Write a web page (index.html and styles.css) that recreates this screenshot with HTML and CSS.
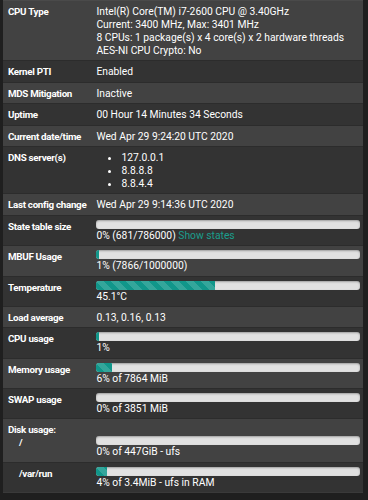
FILE: index.html
```html
<!DOCTYPE html>
<html lang="en">
<head>
    <meta charset="UTF-8">
    <meta name="viewport" content="width=device-width, initial-scale=1.0">
    <title>System Information</title>
    <link rel="stylesheet" href="styles.css">
</head>
<body>
    <div class="panel">
        <table class="info">
            <tr>
                <th>CPU Type</th>
                <td>Intel(R) Core(TM) i7-2600 CPU @ 3.40GHz<br>
                    Current: 3400 MHz, Max: 3401 MHz<br>
                    8 CPUs: 1 package(s) x 4 core(s) x 2 hardware threads<br>
                    AES-NI CPU Crypto: No</td>
            </tr>
            <tr>
                <th>Kernel PTI</th>
                <td>Enabled</td>
            </tr>
            <tr>
                <th>MDS Mitigation</th>
                <td>Inactive</td>
            </tr>
            <tr>
                <th>Uptime</th>
                <td>00 Hour 14 Minutes 34 Seconds</td>
            </tr>
            <tr>
                <th>Current date/time</th>
                <td>Wed Apr 29 9:24:20 UTC 2020</td>
            </tr>
            <tr>
                <th>DNS server(s)</th>
                <td>
                    <ul class="dns">
                        <li>127.0.0.1</li>
                        <li>8.8.8.8</li>
                        <li>8.8.4.4</li>
                    </ul>
                </td>
            </tr>
            <tr>
                <th>Last config change</th>
                <td>Wed Apr 29 9:14:36 UTC 2020</td>
            </tr>
            <tr>
                <th>State table size</th>
                <td>
                    <div class="progress"><div class="bar" style="width: 0%"></div></div>
                    0% (681/786000) <a href="#">Show states</a>
                </td>
            </tr>
            <tr>
                <th>MBUF Usage</th>
                <td>
                    <div class="progress"><div class="bar" style="width: 1%"></div></div>
                    1% (7866/1000000)
                </td>
            </tr>
            <tr>
                <th>Temperature</th>
                <td>
                    <div class="progress"><div class="bar striped" style="width: 45%"></div></div>
                    45.1&deg;C
                </td>
            </tr>
            <tr>
                <th>Load average</th>
                <td>0.13, 0.16, 0.13</td>
            </tr>
            <tr>
                <th>CPU usage</th>
                <td>
                    <div class="progress"><div class="bar" style="width: 1%"></div></div>
                    1%
                </td>
            </tr>
            <tr>
                <th>Memory usage</th>
                <td>
                    <div class="progress"><div class="bar striped" style="width: 6%"></div></div>
                    6% of 7864 MiB
                </td>
            </tr>
            <tr>
                <th>SWAP usage</th>
                <td>
                    <div class="progress"><div class="bar" style="width: 0%"></div></div>
                    0% of 3851 MiB
                </td>
            </tr>
            <tr class="disk">
                <th>Disk usage:<br><span class="mount">/</span></th>
                <td>
                    <div class="progress"><div class="bar" style="width: 0%"></div></div>
                    0% of 447GiB - ufs
                </td>
            </tr>
            <tr>
                <th><span class="mount">/var/run</span></th>
                <td>
                    <div class="progress"><div class="bar striped" style="width: 4%"></div></div>
                    4% of 3.4MiB - ufs in RAM
                </td>
            </tr>
        </table>
    </div>
</body>
</html>
```

FILE: styles.css
```css
body {
    font-family: Roboto, "Noto Sans", sans-serif;
    font-size: 10.3px;
    background-color: #1f1f1f;
    color: #fff;
    margin: 0;
    padding: 0 5px 0 3px;
}
.panel {
    background: #333;
    border-top: 1px solid #4a4a4a;
    border-bottom: 1px solid #3a3a3a;
}
.info {
    width: 100%;
    border-collapse: collapse;
}
.info tr:nth-child(odd) {
    background: #424242;
}
.info tr:nth-child(even) {
    background: #333;
}
.info th,
.info td {
    padding: 4px 3px 3.4px 5px;
    line-height: 13px;
    text-align: left;
    vertical-align: top;
    border-top: 1px solid #2c2c2c;
}
.info tr:first-child th,
.info tr:first-child td {
    border-top: 0;
}
.info th {
    width: 77px;
    padding-right: 5px;
    font-size: 9.8px;
    letter-spacing: -0.3px;
    font-weight: bold;
    white-space: nowrap;
}
.dns {
    margin: 0;
    padding-left: 25px;
}
.progress {
    height: 9px;
    background: #e1e1e1;
    border-radius: 3px;
    box-shadow: inset 0 1px 2px rgba(0, 0, 0, .3);
    overflow: hidden;
}
.bar {
    height: 100%;
    background-color: #11968a;
}
.striped {
    background-image: linear-gradient(45deg, rgba(255, 255, 255, .15) 25%, transparent 25%, transparent 50%, rgba(255, 255, 255, .15) 50%, rgba(255, 255, 255, .15) 75%, transparent 75%, transparent);
    background-size: 15px 15px;
}
a {
    color: #1b9e8d;
    text-decoration: none;
}
.mount {
    padding-left: 11px;
}
.disk td {
    padding-top: 17px;
}
```
